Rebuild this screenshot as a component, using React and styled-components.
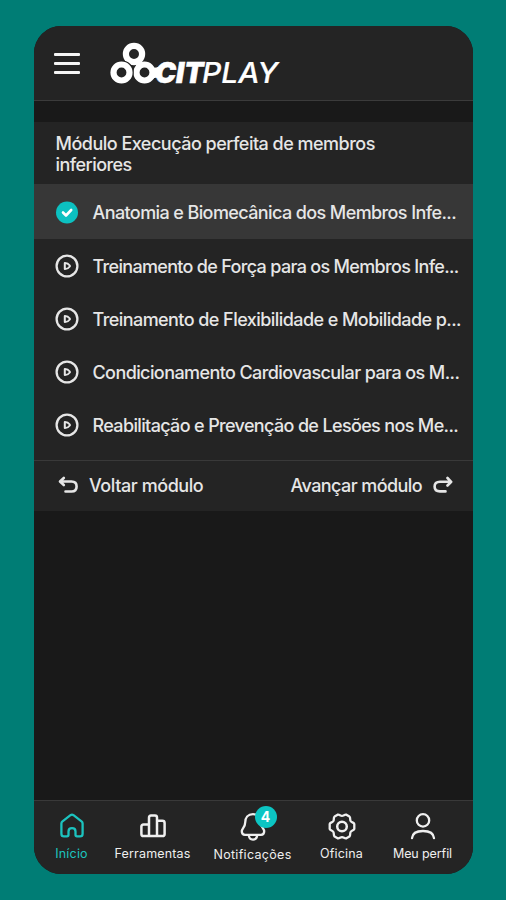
import React from "react";
import styled, { createGlobalStyle } from "styled-components";

const GlobalStyle = createGlobalStyle`
  * { box-sizing: border-box; }
  body { margin: 0; background: #007d75; }
`;

const Page = styled.div`
  width: 506px;
  height: 900px;
  padding: 26px 33px 26px 34px;
  background: #007d75;
  font-family: Inter, "Liberation Sans", sans-serif;
  color: #e6e6e6;
`;

const Phone = styled.main`
  height: 848px;
  display: flex;
  flex-direction: column;
  background: #191919;
  border-radius: 27px;
  overflow: hidden;
`;

const Header = styled.header`
  flex: none;
  height: 75px;
  padding-left: 20px;
  display: flex;
  align-items: flex-start;
  background: #242424;
  border-bottom: 1px solid #3b3b3b;
`;

const MenuButton = styled.button`
  width: 26px;
  height: 22px;
  margin: 27px 0 0;
  padding: 0;
  border: 0;
  background: none;
  display: flex;
  flex-direction: column;
  gap: 6px;
`;

const MenuBar = styled.span`
  height: 3px;
  border-radius: 1px;
  background: #f5f5f5;
`;

const LogoSvg = styled.svg`
  display: block;
  width: 190px;
  height: 56px;
  margin: 14px 0 0 28px;
  overflow: visible;
`;

const Module = styled.section`
  flex: none;
  margin-top: 21px;
  background: #242424;
`;

const ModuleTitle = styled.h1`
  margin: 0;
  height: 62px;
  padding: 11px 0 0 21.5px;
  font-size: 18px;
  line-height: 21px;
  font-weight: 500;
`;

const Text = styled.span`
  display: block;
  white-space: nowrap;
  letter-spacing: ${(p) => p.$track || 0}px;
`;

const Lessons = styled.ul`
  margin: 0;
  padding: 0 0 9px;
  list-style: none;
`;

const Lesson = styled.li`
  height: ${(p) => (p.$active ? 55 : 53)}px;
  padding-left: 21px;
  padding-top: ${(p) => (p.$active ? 1 : 0)}px;
  display: flex;
  align-items: center;
  gap: 13.5px;
  font-size: 18px;
  font-weight: 500;
  background: ${(p) => (p.$active ? "#373737" : "transparent")};

  ${Text} {
    padding-top: 1.5px;
  }
`;

const Icon = styled.svg`
  display: block;
  flex: none;
  width: ${(p) => p.$w}px;
  height: ${(p) => p.$h || p.$w}px;
  fill: none;
  stroke: currentColor;
  stroke-width: ${(p) => p.$stroke || 2.3};
  stroke-linecap: round;
  stroke-linejoin: round;
`;

const Pager = styled.div`
  height: 51px;
  padding: 0 20px 2px 24px;
  display: flex;
  align-items: center;
  justify-content: space-between;
  border-top: 1px solid #393939;
`;

const PagerButton = styled.button`
  display: flex;
  align-items: center;
  gap: ${(p) => p.$gap}px;
  padding: 0;
  border: 0;
  background: none;
  color: inherit;
  font: 500 18px Inter, "Liberation Sans", sans-serif;
`;

const TabBar = styled.nav`
  flex: none;
  height: 74px;
  margin-top: auto;
  padding: 0 12px 0 12px;
  display: grid;
  grid-template-columns: 51px 111px 89px 89px 73px;
  background: #242424;
  border-top: 1px solid #393939;
`;

const Tab = styled.div`
  display: flex;
  flex-direction: column;
  align-items: center;
  padding-top: 12px;
  color: ${(p) => (p.$active ? "#1cc3bf" : "#efefef")};
  font-size: 12.5px;
  line-height: 16px;
`;

const TabIcon = styled.div`
  position: relative;
  height: ${(p) => (p.$tall ? 34 : 33)}px;
`;

const Badge = styled.span`
  position: absolute;
  left: 15px;
  top: -7px;
  width: 22px;
  height: 22px;
  border-radius: 50%;
  background: #0cc5c3;
  color: #fff;
  font-size: 14px;
  line-height: 22px;
  font-weight: 700;
  text-align: center;
`;

function Logo() {
  return (
    <LogoSvg viewBox="108 40 190 56" aria-label="CITPLAY">
      <g fill="none" stroke="#fff" strokeWidth="6.2">
        <circle cx="134" cy="54" r="8.1" />
        <circle cx="144.5" cy="72.5" r="8" />
        <circle cx="121.5" cy="72.5" r="11.4" stroke="#242424" strokeWidth="1.6" />
        <circle cx="121.5" cy="72.5" r="8" />
      </g>
      <path d="M137 62l9 3-4 3-6-2zM151 67.5q4 1 8-1v12q-4-2-8 1z" fill="#fff" />
      <text x="155" y="82.8" fill="#fff" stroke="#fff" strokeWidth="0.5" fontFamily="Inter" fontSize="28.5" fontStyle="italic" fontWeight="900" textLength="48.5" lengthAdjust="spacingAndGlyphs">CIT</text>
      <text x="202" y="82.8" fill="#fff" stroke="#fff" strokeWidth="0.2" fontFamily="Inter" fontSize="28.5" fontStyle="italic" fontWeight="500" textLength="76" lengthAdjust="spacingAndGlyphs">PLAY</text>
    </LogoSvg>
  );
}

const CheckIcon = () => (
  <Icon viewBox="0 0 24 24" $w={24}>
    <circle cx="12" cy="12.5" r="11" fill="#0cc1c1" stroke="none" />
    <path d="M8 12.5l3 3 5.2-5.5" stroke="#fff" strokeWidth="2.6" />
  </Icon>
);

const PlayIcon = () => (
  <Icon viewBox="0 0 24 24" $w={24}>
    <circle cx="12" cy="12" r="10.4" />
    <path d="M9.8 8.9v6.2q3 .1 5-2.6.4-.5 0-1-2-2.7-5-2.6z" strokeWidth="2" />
  </Icon>
);

const lessons = [
  { text: "Anatomia e Biomecânica dos Membros Infe...", track: -0.6, done: true },
  { text: "Treinamento de Força para os Membros Infe...", track: -0.68 },
  { text: "Treinamento de Flexibilidade e Mobilidade p...", track: -0.56 },
  { text: "Condicionamento Cardiovascular para os M...", track: -0.59 },
  { text: "Reabilitação e Prevenção de Lesões nos Me...", track: -0.65 },
];

const tabs = [
  {
    label: "Início",
    track: 0.2,
    active: true,
    icon: (
      <Icon viewBox="0 0 24 26" $w={24} $h={26}>
        <path d="M1.4 10.4Q1.4 9.2 2.5 8.3L10.5 2.2Q12 1.2 13.5 2.2L21.5 8.3Q22.6 9.2 22.6 10.4V20.7Q22.6 23.4 20 23.4H17Q15.5 23.4 15.5 21.8V18.5Q15.5 15.2 12 15.2Q8.5 15.2 8.5 18.5V21.8Q8.5 23.4 7 23.4H4Q1.4 23.4 1.4 20.7Z" />
      </Icon>
    ),
  },
  {
    label: "Ferramentas",
    track: 0.15,
    icon: (
      <Icon viewBox="0 0 26 26" $w={26} $h={26} $stroke={2.5}>
        <path d="M9 23V4.7Q9 2.6 11 2.6H15Q17 2.6 17 4.7V23M9 11.5H3.5Q1.4 11.5 1.4 13.6V21Q1.4 23.1 3.5 23.1H22.4Q24.6 23.1 24.6 21V9.9Q24.6 7.8 22.4 7.8H17" />
      </Icon>
    ),
  },
  {
    label: "Notificações",
    track: 0.3,
    badge: 4,
    icon: (
      <Icon viewBox="0 0 26 30" $w={26} $h={30}>
        <path d="M13 1.2C8 1.2 5.2 4.8 5.2 9.5C5.2 14 1.8 15.6 1.8 18.2Q1.8 21.8 5 21.8H21Q24.2 21.8 24.2 18.2C24.2 15.6 20.8 14 20.8 9.5C20.8 4.8 18 1.2 13 1.2ZM8.8 22Q9 26.6 13 26.6Q17 26.6 17.2 22" />
      </Icon>
    ),
  },
  {
    label: "Oficina",
    track: 0.2,
    icon: (
      <Icon viewBox="0 0 28 28" $w={28}>
        <path d="M9.6 1.7C11.3 1.1 12.2 2.8 14 2.8S16.7 1.1 18.4 1.7L21.4 3.5C22.8 4.8 21.7 6.5 22.6 8S25.9 9.3 26.3 11V15.9C25.9 17.5 23.5 17.5 22.6 19S22.8 22.3 21.4 23.6L18.4 25.3C16.7 25.9 15.8 24.2 14 24.2S11.3 25.9 9.6 25.3L6.6 23.6C5.2 22.3 6.3 20.5 5.4 19S2.1 17.5 1.7 15.9V11C2.1 9.3 4.5 9.5 5.4 8S5.2 4.8 6.6 3.5Z" />
        <circle cx="14" cy="13.5" r="4.8" strokeWidth="2.5" />
      </Icon>
    ),
  },
  {
    label: "Meu perfil",
    track: -0.1,
    icon: (
      <Icon viewBox="0 0 26 28" $w={26} $h={28}>
        <circle cx="13" cy="7.4" r="6.2" />
        <path d="M2 25.2C2.4 20.4 7 18 13 18S23.6 20.4 24 25.2" />
      </Icon>
    ),
  },
];

export default function App() {
  return (
    <Page>
      <GlobalStyle />
      <Phone>
        <Header>
          <MenuButton aria-label="Menu">
            <MenuBar />
            <MenuBar />
            <MenuBar />
          </MenuButton>
          <Logo />
        </Header>
        <Module>
          <ModuleTitle>
            <Text $track={-0.51}>Módulo Execução perfeita de membros</Text>
            <Text $track={-0.55}>inferiores</Text>
          </ModuleTitle>
          <Lessons>
            {lessons.map((l) => (
              <Lesson key={l.text} $active={l.done}>
                {l.done ? <CheckIcon /> : <PlayIcon />}
                <Text $track={l.track}>{l.text}</Text>
              </Lesson>
            ))}
          </Lessons>
          <Pager>
            <PagerButton $gap={11}>
              <Icon viewBox="0 0 20 18" $w={20} $h={18} $stroke={2.6}>
                <path d="M5.8 2L2 5.5L5.8 9M2.4 5.5H13.5Q18.6 5.5 18.6 10.5Q18.6 15.5 13.5 15.5H7.5" />
              </Icon>
              <Text $track={-0.43}>Voltar módulo</Text>
            </PagerButton>
            <PagerButton $gap={11}>
              <Text $track={-0.58}>Avançar módulo</Text>
              <Icon viewBox="0 0 20 18" $w={20} $h={18} $stroke={2.6}>
                <path d="M14.5 2L18.2 5.8L14.5 9.5M17.8 5.8H7Q1.6 5.8 1.6 10.5Q1.6 15.4 7 15.4H12.5" />
              </Icon>
            </PagerButton>
          </Pager>
        </Module>
        <TabBar>
          {tabs.map((t) => (
            <Tab key={t.label} $active={t.active}>
              <TabIcon $tall={Boolean(t.badge)}>
                {t.icon}
                {t.badge && <Badge>{t.badge}</Badge>}
              </TabIcon>
              <Text $track={t.track}>{t.label}</Text>
            </Tab>
          ))}
        </TabBar>
      </Phone>
    </Page>
  );
}
